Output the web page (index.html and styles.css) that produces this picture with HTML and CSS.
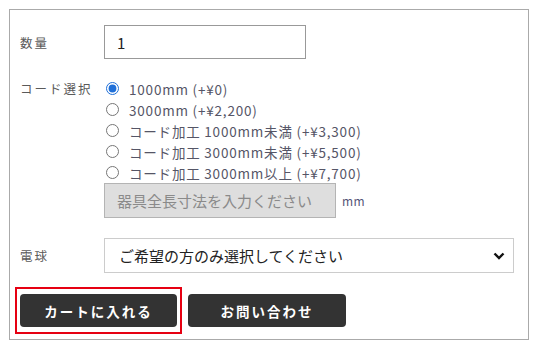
FILE: index.html
```html
<!DOCTYPE html>
<html lang="ja">
<head>
  <meta charset="UTF-8">
  <meta name="viewport" content="width=device-width, initial-scale=1.0">
  <title>商品オプション</title>
  <link rel="stylesheet" href="styles.css">
</head>
<body>
  <form class="order-box">
    <div class="row row-qty">
      <label class="row-label" for="qty">数量</label>
      <input type="text" id="qty" class="qty-input" value="1">
    </div>

    <div class="row row-cord">
      <div class="row-label">コード選択</div>
      <div class="cord-field">
        <label class="radio-line"><input type="radio" name="cord" checked>1000mm (+¥0)</label>
        <label class="radio-line"><input type="radio" name="cord">3000mm (+¥2,200)</label>
        <label class="radio-line"><input type="radio" name="cord">コード加工 1000mm未満 (+¥3,300)</label>
        <label class="radio-line"><input type="radio" name="cord">コード加工 3000mm未満 (+¥5,500)</label>
        <label class="radio-line"><input type="radio" name="cord">コード加工 3000mm以上 (+¥7,700)</label>
        <div class="length-line">
          <input type="text" class="length-input" placeholder="器具全長寸法を入力ください" disabled>
          <span class="unit">mm</span>
        </div>
      </div>
    </div>

    <div class="row row-bulb">
      <label class="row-label" for="bulb">電球</label>
      <div class="select-wrap">
        <select id="bulb" class="bulb-select">
          <option>ご希望の方のみ選択してください</option>
          <option>LED電球</option>
        </select>
        <svg class="select-arrow" width="12" height="8" viewBox="0 0 12 8">
          <path d="M1.5 1.5 L6 6 L10.5 1.5" fill="none" stroke="#111" stroke-width="2.4"/>
        </svg>
      </div>
    </div>

    <div class="actions">
      <div class="cart-frame">
        <button type="button" class="btn">カートに入れる</button>
      </div>
      <button type="button" class="btn btn-contact">お問い合わせ</button>
    </div>
  </form>
</body>
</html>
```

FILE: styles.css
```css
body {
  margin: 0;
  padding: 9px 0 0 9px;
  font-family: "Noto Sans CJK JP", "Noto Sans", sans-serif;
  color: #555;
  background-color: #fff;
}
.order-box {
  box-sizing: border-box;
  width: 520px;
  height: 331px;
  border: 1px solid #aaa;
  padding: 15px 10px 0 10px;
}
.row {
  display: flex;
}
.row-label {
  width: 84px;
  flex-shrink: 0;
  font-size: 12.5px;
  letter-spacing: 2px;
  color: #5a5a5a;
}
.row-qty,
.row-bulb {
  align-items: center;
}
.qty-input {
  box-sizing: border-box;
  width: 202px;
  height: 34px;
  border: 1px solid #999;
  padding: 0 12px;
  font-family: inherit;
  font-size: 15px;
  color: #222;
  outline: none;
}
.row-cord {
  margin-top: 19px;
}
.row-cord .row-label {
  line-height: 21px;
}
.cord-field {
  display: flex;
  flex-direction: column;
}
.radio-line {
  display: flex;
  align-items: center;
  height: 21px;
  font-size: 13.5px;
  letter-spacing: 0.8px;
  color: #556;
}
.radio-line input {
  width: 13px;
  height: 13px;
  margin: 0 10px 0 2px;
  accent-color: #1f6fd8;
}
.length-line {
  display: flex;
  align-items: center;
}
.length-input {
  box-sizing: border-box;
  width: 232px;
  height: 35px;
  border: 1px solid #b4b4b4;
  background-color: #dedede;
  padding: 0 12px;
  font-family: inherit;
  font-size: 15px;
}
.length-input::placeholder {
  color: #8a8a8a;
}
.unit {
  margin-left: 6px;
  font-size: 12px;
  letter-spacing: 0.5px;
  color: #557;
}
.row-bulb {
  margin-top: 20px;
}
.select-wrap {
  position: relative;
}
.bulb-select {
  box-sizing: border-box;
  width: 410px;
  height: 35px;
  border: 1px solid #ccc;
  border-radius: 0;
  background-color: #fff;
  padding: 0 14px;
  font-family: inherit;
  font-size: 15px;
  color: #222;
  appearance: none;
  outline: none;
}
.select-arrow {
  position: absolute;
  right: 9px;
  top: 14px;
  pointer-events: none;
}
.actions {
  display: flex;
  align-items: center;
  gap: 6px;
  margin-top: 14px;
  margin-left: -5px;
}
.cart-frame {
  display: flex;
  border: 2px solid #e60012;
  padding: 5px 3px;
}
.btn {
  width: 157px;
  height: 33px;
  border: none;
  border-radius: 4px;
  background-color: #333;
  color: #fff;
  font-family: inherit;
  font-size: 13.5px;
  font-weight: bold;
  letter-spacing: 2px;
  cursor: pointer;
}
.btn-contact {
  width: 158px;
}
```
